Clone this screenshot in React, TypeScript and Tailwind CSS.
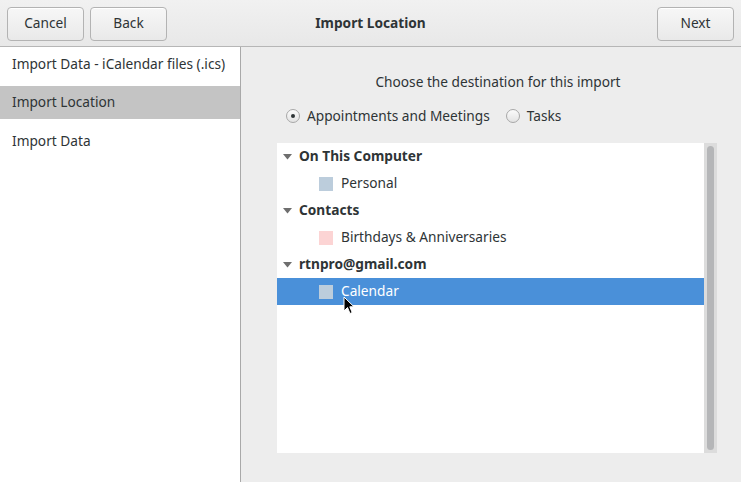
import React from "react";

const font = { fontFamily: '"Noto Sans", "DejaVu Sans", sans-serif' };

function Btn({ label, className = "" }: { label: string; className?: string }) {
  return (
    <button
      className={
        "h-[34px] w-[77px] rounded-[4px] border border-[#b3b3b3] bg-gradient-to-b from-[#f7f7f7] to-[#e9e9e9] text-[13.7px] text-[#2e3436] shadow-[inset_0_1px_0_#ffffff] " +
        className
      }
    >
      {label}
    </button>
  );
}

function Tri() {
  return (
    <svg width="9" height="6" viewBox="0 0 9 6" className="shrink-0">
      <path d="M0 0 L9 0 L4.5 5.5 Z" fill="#6e6e6e" />
    </svg>
  );
}

function Radio({ checked }: { checked: boolean }) {
  return (
    <span className="flex h-[14px] w-[14px] items-center justify-center rounded-full border border-[#a8a8a8] bg-gradient-to-b from-[#fbfbfb] to-[#e3e3e3]">
      {checked && <span className="h-[4px] w-[4px] rounded-full bg-[#2e3436]" />}
    </span>
  );
}

export default function App() {
  return (
    <div className="flex h-[482px] w-[741px] flex-col overflow-hidden bg-[#ededed] text-[13.7px] text-[#2e3436]" style={font}>
      {/* header */}
      <div className="grid h-[47px] shrink-0 grid-cols-[1fr_auto_1fr] items-center border-b border-[#b6b6b6] bg-gradient-to-b from-[#f1f1f1] to-[#e8e8e8] px-[7px] pt-[1px]">
        <div className="flex">
          <Btn label="Cancel" />
          <Btn label="Back" className="ml-[6px]" />
        </div>
        <div className="text-center font-bold text-[#2e3436]">Import Location</div>
        <div className="flex justify-end">
          <Btn label="Next" />
        </div>
      </div>
      <div className="flex min-h-0 flex-1">
        {/* sidebar */}
        <div className="flex w-[241px] shrink-0 flex-col border-r border-[#a9a9a9] bg-white pt-[1px]">
          <div className="flex h-[33px] items-center pl-[12px]">Import Data - iCalendar files (.ics)</div>
          <div className="mt-[5px] flex h-[33px] items-center bg-[#c4c4c4] pl-[12px]">Import Location</div>
          <div className="mt-[6px] flex h-[33px] items-center pl-[12px]">Import Data</div>
        </div>
        {/* main */}
        <div className="flex flex-1 flex-col pl-[36px] pr-[24px]">
          <div className="mt-[25px] text-center pl-[2px]">Choose the destination for this import</div>
          <div className="mt-[13px] flex items-center pl-[9px]">
            <Radio checked />
            <span className="ml-[7px]">Appointments and Meetings</span>
            <span className="ml-[16px]"><Radio checked={false} /></span>
            <span className="ml-[7px]">Tasks</span>
          </div>
          <div className="mt-[17px] flex h-[310px]">
            <div className="relative flex-1 bg-white">
              <div className="flex h-[27px] items-center pl-[6px] font-bold">
                <Tri />
                <span className="ml-[7px]">On This Computer</span>
              </div>
              <div className="flex h-[27px] items-center pl-[42px]">
                <span className="h-[14px] w-[14px] bg-[#bccddc]" />
                <span className="ml-[8px]">Personal</span>
              </div>
              <div className="flex h-[27px] items-center pl-[6px] font-bold">
                <Tri />
                <span className="ml-[7px]">Contacts</span>
              </div>
              <div className="flex h-[27px] items-center pl-[42px]">
                <span className="h-[14px] w-[14px] bg-[#fcd4d4]" />
                <span className="ml-[8px]">Birthdays &amp; Anniversaries</span>
              </div>
              <div className="flex h-[27px] items-center pl-[6px] font-bold">
                <Tri />
                <span className="ml-[7px]">rtnpro@gmail.com</span>
              </div>
              <div className="flex h-[27px] items-center bg-[#4a90d9] pl-[42px] text-white">
                <span className="h-[14px] w-[14px] bg-[#bccddc]" />
                <span className="ml-[8px]">Calendar</span>
              </div>
              <svg className="absolute left-[66px] top-[153px]" width="12" height="19" viewBox="0 0 12 19">
                <path d="M1 1 L1 15 L4.5 11.5 L7 17.5 L9.2 16.5 L6.8 10.8 L11 10.8 Z" fill="#000" stroke="#fff" strokeWidth="1" strokeLinejoin="round" />
              </svg>
            </div>
            <div className="flex w-[13px] justify-center bg-[#dcdcdc] py-[3px]">
              <div className="w-[7px] rounded-full bg-[#b5b6b8]" />
            </div>
          </div>
        </div>
      </div>
    </div>
  );
}
